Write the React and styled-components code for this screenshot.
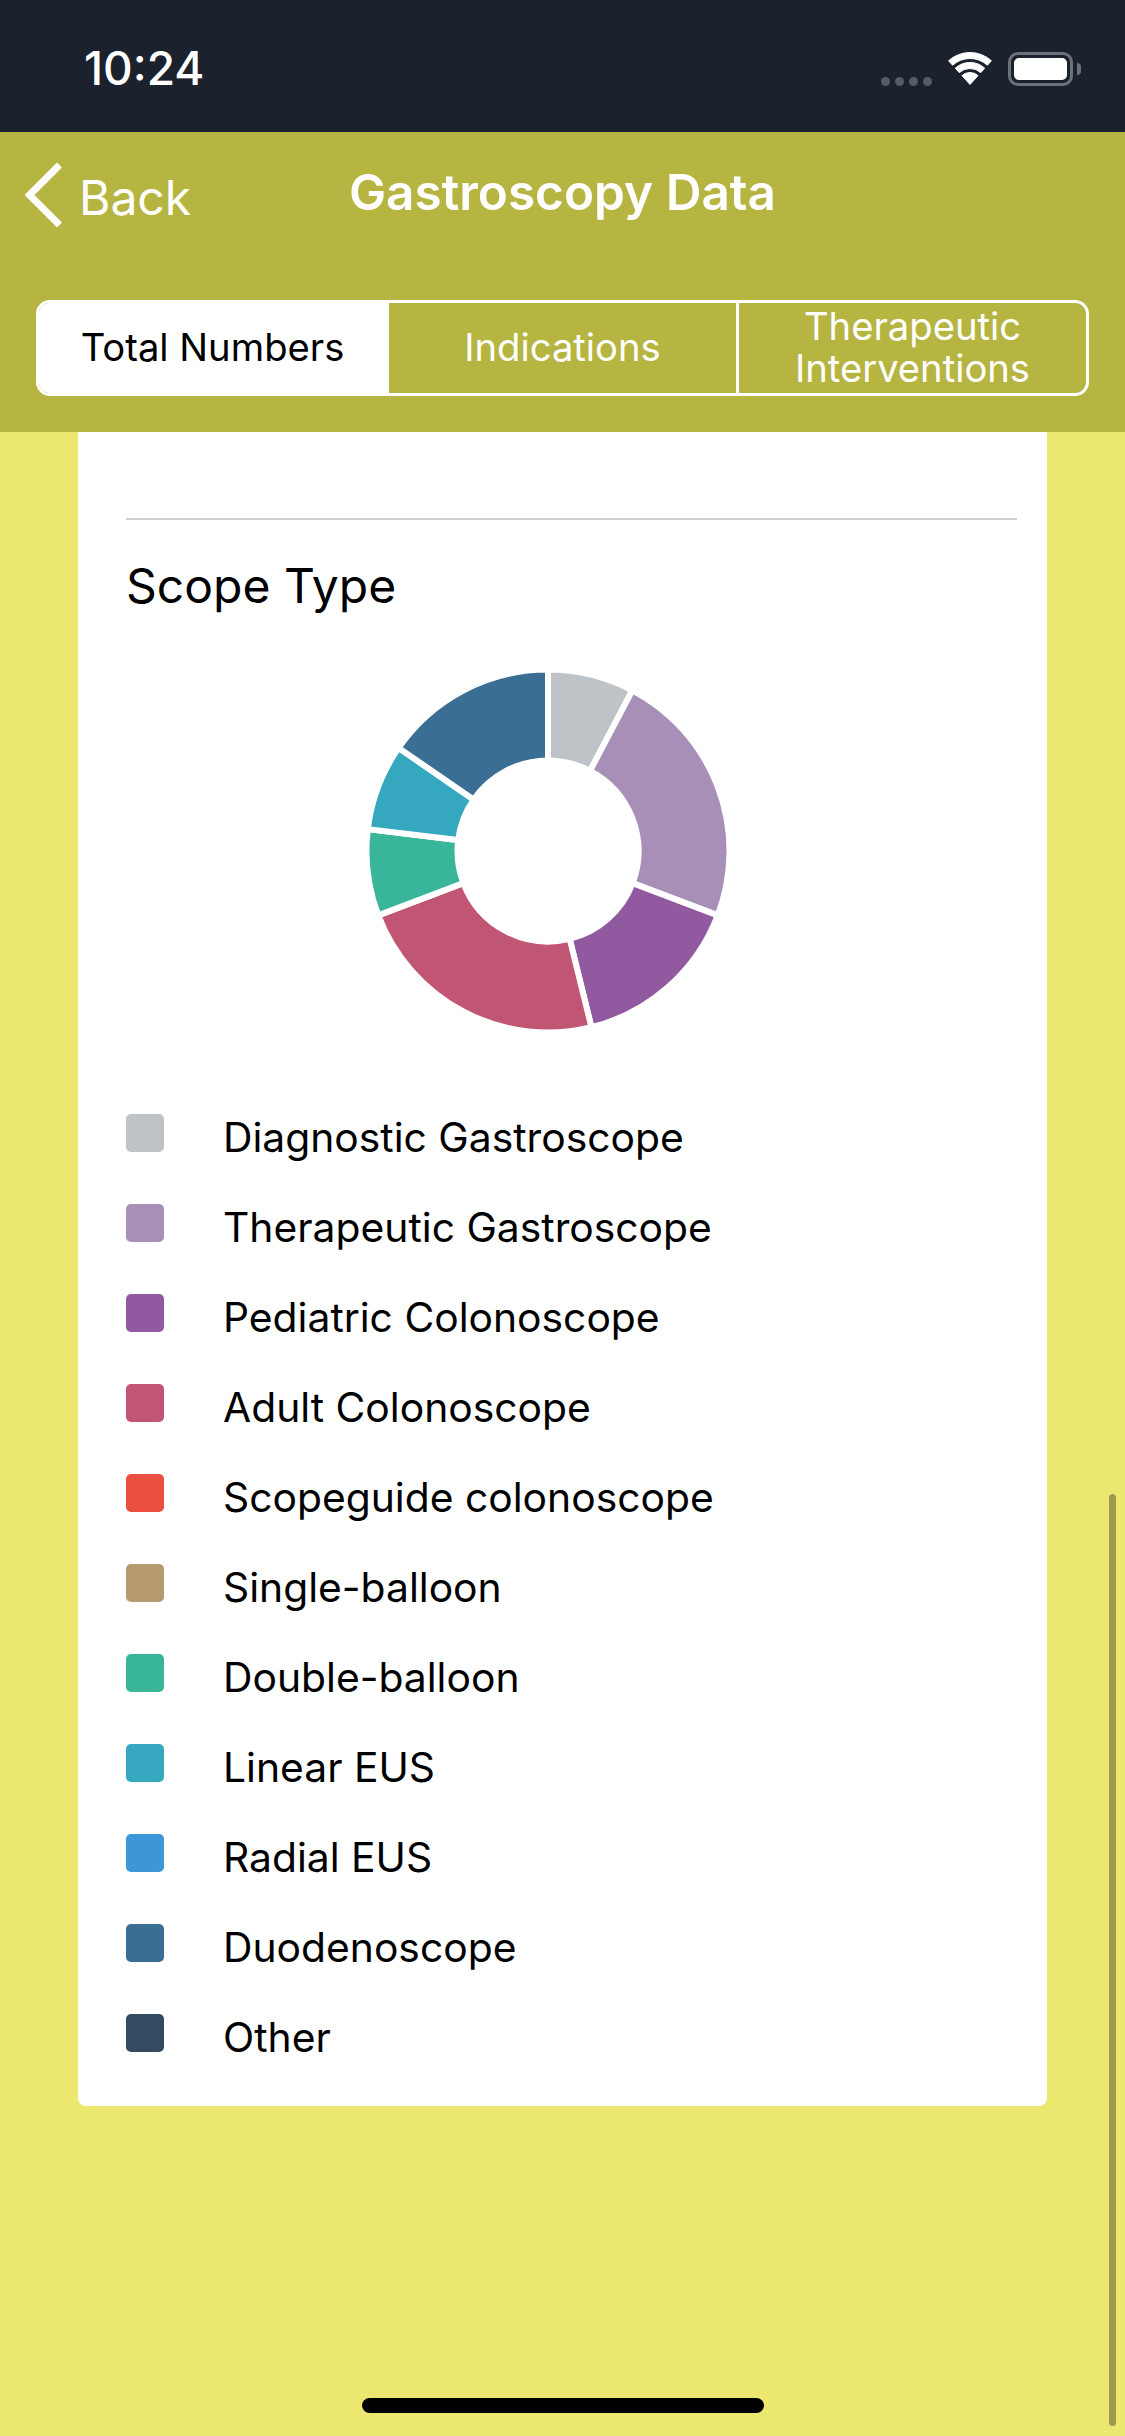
import React from 'react'
import styled, { createGlobalStyle } from 'styled-components'

const GlobalStyle = createGlobalStyle`
  html, body {
    margin: 0;
    padding: 0;
    background: #ece76f;
  }
  body {
    font-family: Inter, "Noto Sans", sans-serif;
    -webkit-font-smoothing: antialiased;
  }
`

const Screen = styled.div`
  position: relative;
  width: 1125px;
  height: 2436px;
  overflow: hidden;
  background: #ece76f;
`

const StatusBar = styled.div`
  height: 132px;
  box-sizing: border-box;
  padding: 0 44px 0 84px;
  display: flex;
  justify-content: space-between;
  background: #1b222d;
`

const Clock = styled.span`
  margin-top: 42px;
  font-size: 46px;
  line-height: 53px;
  font-weight: 500;
  color: #fff;
`

const StatusIcons = styled.div`
  display: flex;
  margin-top: 52px;
  height: 34px;
`

const SignalDots = styled.div`
  display: flex;
  align-items: flex-end;
  gap: 5px;
  margin-right: 15px;
`

const SignalDot = styled.i`
  width: 9px;
  height: 9px;
  border-radius: 50%;
  background: #565b64;
`

const WifiIcon = styled.svg`
  width: 46px;
  height: 33px;
  margin-right: 15px;
`

const Battery = styled.div`
  width: 65px;
  height: 34px;
  box-sizing: border-box;
  padding: 3px;
  border: 3px solid #6d7178;
  border-radius: 10px;
`

const BatteryFill = styled.div`
  height: 100%;
  border-radius: 5px;
  background: #fff;
`

const BatteryNub = styled.div`
  align-self: center;
  width: 4px;
  height: 12px;
  margin-left: 4px;
  border-radius: 0 4px 4px 0;
  background: #6d7178;
`

const Header = styled.header`
  height: 300px;
  box-sizing: border-box;
  padding: 0 36px 36px 36px;
  display: flex;
  flex-direction: column;
  justify-content: flex-end;
  background: #b6b541;
`

const NavBar = styled.div`
  display: grid;
  grid-template-columns: 1fr auto 1fr;
  margin: 0 -36px;
  padding-bottom: 70px;
  color: #fff;
`

const BackLink = styled.a`
  display: flex;
  align-items: center;
  gap: 16px;
  padding-left: 25px;
  font-size: 48px;
  line-height: 64px;
  color: #fff;
`

const Chevron = styled.svg`
  width: 38px;
  height: 66px;
  margin-top: -6px;
`

const Title = styled.h1`
  margin: -6px 0 0;
  font-size: 49.5px;
  line-height: 64px;
  font-weight: 600;
`

const Tabs = styled.div`
  display: flex;
  height: 96px;
  box-sizing: border-box;
  border: 3px solid #fff;
  border-radius: 14px;
  overflow: hidden;
`

const Tab = styled.div`
  flex: 1 1 0;
  display: flex;
  align-items: center;
  justify-content: center;
  padding-bottom: 3px;
  text-align: center;
  font-size: 38.2px;
  line-height: 42px;
  color: ${p => (p.$active ? '#000' : '#fff')};
  background: ${p => (p.$active ? '#fff' : 'transparent')};
  & + & {
    border-left: 3px solid #fff;
  }
`

const Card = styled.section`
  width: 969px;
  height: 1674px;
  box-sizing: border-box;
  margin-left: 78px;
  padding: 86px 30px 0 48px;
  background: #fff;
  border-radius: 0 0 8px 8px;
`

const Divider = styled.hr`
  height: 2px;
  margin: 0;
  border: 0;
  background: #cfcfcf;
`

const SectionTitle = styled.h2`
  margin: 34px 0 0;
  font-size: 48px;
  line-height: 64px;
  font-weight: 400;
  color: #000;
`

const ChartWrap = styled.div`
  width: 843px;
  margin-top: 50px;
  display: flex;
  justify-content: center;
`

const Legend = styled.ul`
  list-style: none;
  margin: 0;
  padding: 80px 0 0;
`

const LegendRow = styled.li`
  display: flex;
  height: 90px;
  color: #000;
  font-size: 40.8px;
  line-height: 50px;
`

const Swatch = styled.span`
  flex: none;
  width: 38px;
  height: 38px;
  margin-right: 59px;
  border-radius: 5px;
  background: ${p => p.$color};
`

const RowLabel = styled.span`
  margin-top: -2px;
`

const ScrollThumb = styled.div`
  position: absolute;
  left: 1109px;
  top: 1494px;
  width: 7px;
  height: 932px;
  border-radius: 4px;
  background: #9f9b4d;
`

const HomeIndicator = styled.div`
  position: absolute;
  left: 362px;
  top: 2398px;
  width: 402px;
  height: 15px;
  border-radius: 8px;
  background: #000;
`

const scopes = [
  { name: 'Diagnostic Gastroscope', color: '#bdc3c7', count: 1 },
  { name: 'Therapeutic Gastroscope', color: '#a78fb8', count: 3 },
  { name: 'Pediatric Colonoscope', color: '#9159a0', count: 2 },
  { name: 'Adult Colonoscope', color: '#c05673', count: 3 },
  { name: 'Scopeguide colonoscope', color: '#eb4f3f', count: 0 },
  { name: 'Single-balloon', color: '#b59a6f', count: 0 },
  { name: 'Double-balloon', color: '#39b69a', count: 1 },
  { name: 'Linear EUS', color: '#35a7bf', count: 1 },
  { name: 'Radial EUS', color: '#3c96d8', count: 0 },
  { name: 'Duodenoscope', color: '#3b6e94', count: 2 },
  { name: 'Other', color: '#344a60', count: 0 },
]

// ring segment between two angles, measured clockwise from 12 o'clock
function sector(cx, cy, inner, outer, from, to) {
  const point = (r, deg) => {
    const a = (deg * Math.PI) / 180
    return `${(cx + r * Math.sin(a)).toFixed(2)} ${(cy - r * Math.cos(a)).toFixed(2)}`
  }
  const large = to - from > 180 ? 1 : 0
  return [
    `M${point(outer, from)}`,
    `A${outer} ${outer} 0 ${large} 1 ${point(outer, to)}`,
    `L${point(inner, to)}`,
    inner > 0 ? `A${inner} ${inner} 0 ${large} 0 ${point(inner, from)}` : '',
    'Z',
  ].join(' ')
}

function Donut() {
  const total = scopes.reduce((sum, s) => sum + s.count, 0)
  let angle = 0
  return (
    <svg width="366" height="366" viewBox="0 0 366 366">
      {scopes
        .filter(s => s.count > 0)
        .map(s => {
          const from = angle
          angle += (s.count / total) * 360
          return (
            <path
              key={s.name}
              d={sector(183, 183, 90.5, 181.5, from, angle)}
              fill={s.color}
              stroke="#fff"
              strokeWidth="6"
            />
          )
        })}
    </svg>
  )
}

function Wifi() {
  return (
    <WifiIcon viewBox="0 0 46 33">
      <g fill="#fff" stroke="#fff" strokeWidth="1" strokeLinejoin="round">
        <path d={sector(23, 32.5, 26, 32, -42, 42)} />
        <path d={sector(23, 32.5, 16, 22, -42, 42)} />
        <path d={sector(23, 32.5, 0, 12, -42, 42)} />
      </g>
    </WifiIcon>
  )
}

export default function App() {
  return (
    <Screen>
      <GlobalStyle />
      <StatusBar>
        <Clock>10:24</Clock>
        <StatusIcons>
          <SignalDots>
            <SignalDot />
            <SignalDot />
            <SignalDot />
            <SignalDot />
          </SignalDots>
          <Wifi />
          <Battery>
            <BatteryFill />
          </Battery>
          <BatteryNub />
        </StatusIcons>
      </StatusBar>
      <Header>
        <NavBar>
          <BackLink>
            <Chevron viewBox="0 0 38 66">
              <polyline points="34.5,3 4.5,33 34.5,63" fill="none" stroke="#fff" strokeWidth="7" />
            </Chevron>
            Back
          </BackLink>
          <Title>Gastroscopy Data</Title>
        </NavBar>
        <Tabs>
          <Tab $active>Total Numbers</Tab>
          <Tab>Indications</Tab>
          <Tab>
            Therapeutic
            <br />
            Interventions
          </Tab>
        </Tabs>
      </Header>
      <Card>
        <Divider />
        <SectionTitle>Scope Type</SectionTitle>
        <ChartWrap>
          <Donut />
        </ChartWrap>
        <Legend>
          {scopes.map(s => (
            <LegendRow key={s.name}>
              <Swatch $color={s.color} />
              <RowLabel>{s.name}</RowLabel>
            </LegendRow>
          ))}
        </Legend>
      </Card>
      <ScrollThumb />
      <HomeIndicator />
    </Screen>
  )
}
